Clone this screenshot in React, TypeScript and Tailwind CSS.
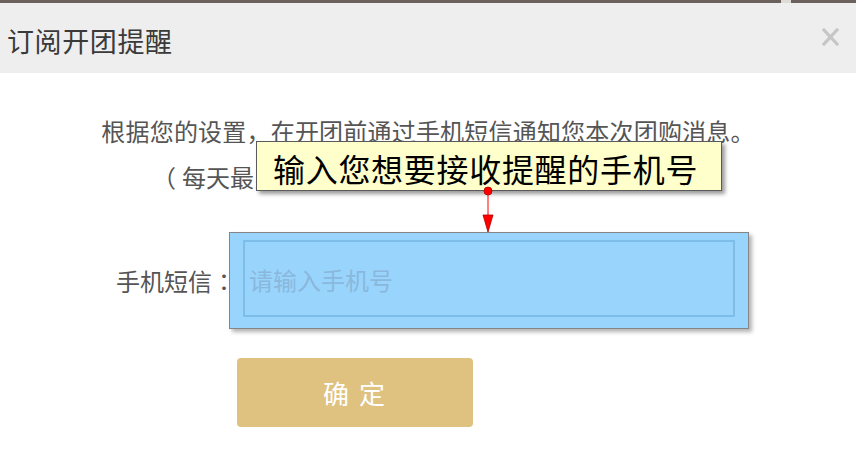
import React from "react";

const FONT = { fontFamily: '"Noto Sans CJK SC", "Noto Sans", sans-serif' };
const JP = { fontFamily: '"Noto Sans CJK JP", sans-serif' };

// red pointer from the note down to the highlighted field
const Pointer = () => (
  <svg className="absolute left-[478px] top-[184px]" width="20" height="52" viewBox="0 0 20 52">
    <line x1="10" y1="7" x2="10" y2="32" stroke="#ff0000" strokeWidth="1" />
    <circle cx="10" cy="7" r="4" fill="#ff0000" stroke="#b00000" strokeWidth="0.8" />
    <polygon points="5,31 15,31 10,48" fill="#ff0000" stroke="#b00000" strokeWidth="0.8" />
  </svg>
);

export default function App() {
  return (
    <div className="relative w-[856px] h-[454px] bg-white overflow-hidden" style={FONT}>
      {/* strip of the page behind */}
      <div className="flex h-[3px]">
        <div className="w-[781px] bg-[#6b605c]" />
        <div className="w-[10px] bg-[#dedad8]" />
        <div className="flex-1 bg-[#6b605c]" />
      </div>

      {/* header */}
      <div className="flex items-center justify-between h-[70px] bg-[#eeeeee] pl-[7px] pr-[17px]">
        <h1 className="text-[27px] text-[#3a3a3a] leading-none tracking-[0.6px] pt-[4px]">订阅开团提醒</h1>
        <svg width="17" height="18" viewBox="0 0 17 18" className="mb-[2px]">
          <path d="M2 2 L15 16 M15 2 L2 16" stroke="#c6c6c6" strokeWidth="3.2" strokeLinecap="square" />
        </svg>
      </div>

      {/* body */}
      <div className="pt-[35px]">
        <p className="text-center text-[24px] tracking-[0.2px] leading-[46px] text-[#555555]">
          根据您的设置，在开团前通过手机短信通知您本次团购消息。
        </p>
        <p className="text-center text-[24px] leading-[46px] text-[#555555] pl-[6px]">
          <span className="mr-[6px]">（</span>每天最多提醒一次，短信完全免费，请放心订阅）
        </p>

        <div className="flex items-center mt-[32px]">
          <label className="w-[236px] shrink-0 text-right text-[24px] text-[#555555] pt-[1px]">
            手机短信<span style={JP}>：</span>
          </label>
          <div className="relative ml-[-7px] w-[520px] h-[97px] border border-[#858585] bg-[#99d4fc] pt-[7px] pl-[13px] shadow-[3px_3px_4px_rgba(0,0,0,0.3)]">
            <div className="w-[492px] h-[77px] border-2 border-[#7dbde8] flex items-center pl-[4px] pt-[2px]">
              <input
                placeholder="请输入手机号"
                className="w-full bg-transparent outline-none text-[24px] placeholder:text-[#89b8dc]"
                style={FONT}
              />
            </div>
          </div>
        </div>

        <button className="ml-[237px] mt-[29px] w-[236px] h-[69px] rounded-[4px] bg-[#dfc280] text-white text-[26px] tracking-[2px]" style={FONT}>
          确 定
        </button>
      </div>

      {/* annotation note */}
      <div className="absolute left-[256px] top-[141px] w-[466px] h-[50px] bg-[#ffffcc] border border-[#5a5a5a] shadow-[3px_3px_4px_rgba(0,0,0,0.4)] pl-[16px] pt-[4px] flex items-center">
        <span className="text-[32px] tracking-[0.7px] text-black leading-none">输入您想要接收提醒的手机号</span>
      </div>
      <Pointer />
    </div>
  );
}
